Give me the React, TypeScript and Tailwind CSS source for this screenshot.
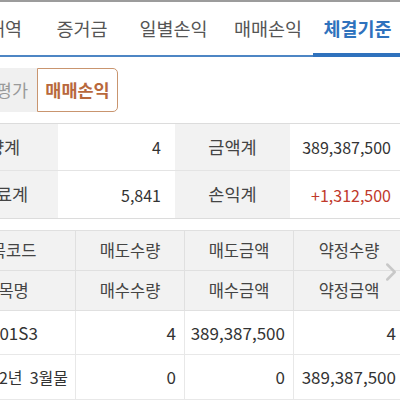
import { ChevronRight } from "lucide-react";

const tabs = [
  { label: "내역", w: "w-[70px]", ml: "-ml-[30px]" },
  { label: "증거금", w: "w-[84px]", ml: "" },
  { label: "일별손익", w: "w-[99px]", ml: "" },
  { label: "매매손익", w: "w-[90px]", ml: "" },
  { label: "체결기준", w: "w-[89px]", ml: "", active: true },
];

const font = "font-['Noto_Sans_CJK_KR','Noto_Sans',sans-serif]";

export default function App() {
  return (
    <div className={`w-[400px] h-[400px] overflow-hidden bg-white ${font} text-[#333]`}>
      <div className="h-[2px] bg-[#9c9c9c]" />

      {/* tabs */}
      <div className="flex h-[55px] border-b-2 border-[#4d86c4] whitespace-nowrap">
        {tabs.map((t) => (
          <div
            key={t.label}
            className={`relative flex shrink-0 items-center justify-center text-[18.5px] ${t.w} ${t.ml} ${
              t.active ? "font-bold text-[#2f72bd]" : "text-[#555]"
            }`}
          >
            {t.label}
            {t.active && (
              <div className="absolute left-0 right-0 -bottom-[2px] h-[4px] bg-[#2f72bd]" />
            )}
          </div>
        ))}
      </div>

      {/* segment */}
      <div className="mt-[11px] flex h-[44px] whitespace-nowrap">
        <div className="-ml-[44px] flex w-[81px] shrink-0 items-center justify-end pr-[9px] bg-[#f0f0f0] text-[17.5px] text-[#999]">
          손익평가
        </div>
        <div className="flex w-[81px] shrink-0 items-center justify-center rounded-r-[5px] border border-[#c9956f] bg-white text-[17.5px] font-bold text-[#b8683c]">
          매매손익
        </div>
      </div>

      {/* summary */}
      <div className="mt-[11px] border-t border-b border-[#dcdcdc] text-[16px] whitespace-nowrap">
        {[
          ["수량계", "4", "금액계", "389,387,500", false],
          ["수수료계", "5,841", "손익계", "+1,312,500", true],
        ].map(([l1, v1, l2, v2, red], i) => (
          <div key={i} className={`flex h-[47px] ${i === 0 ? "border-b border-[#e4e4e4]" : ""}`}>
            <div className="-ml-[66px] flex w-[124px] shrink-0 items-center justify-center bg-[#f2f2f2] text-[17.5px] text-[#444]">
              {l1}
            </div>
            <div className="flex w-[117px] shrink-0 items-center justify-end pr-[14px]">{v1}</div>
            <div className="flex w-[115px] shrink-0 items-center justify-center bg-[#f2f2f2] text-[17.5px] text-[#444]">
              {l2}
            </div>
            <div
              className={`flex w-[110px] shrink-0 items-center justify-end pr-[9px] ${
                red ? "text-[#c0392b]" : ""
              }`}
            >
              {v2}
            </div>
          </div>
        ))}
      </div>

      {/* detail table */}
      <div className="relative mt-[11px] border-t border-[#e0e0e0] whitespace-nowrap">
        <div className="bg-[#f2f2f2] text-[16.5px] text-[#444]">
          {[
            ["종목코드", "매도수량", "매도금액", "약정수량"],
            ["종목명", "매수수량", "매수금액", "약정금액"],
          ].map((row, i) => (
            <div key={i} className="flex h-[40px] border-b border-[#e0e0e0]">
              <div className="-ml-[63px] flex w-[139px] shrink-0 items-center justify-center border-r border-[#e0e0e0]">
                {row[0]}
              </div>
              <div className="flex w-[109px] shrink-0 items-center justify-center border-r border-[#e0e0e0]">
                {row[1]}
              </div>
              <div className="flex w-[109px] shrink-0 items-center justify-center border-r border-[#e0e0e0]">
                {row[2]}
              </div>
              <div className="flex w-[110px] shrink-0 items-center justify-center">{row[3]}</div>
            </div>
          ))}
        </div>
        <ChevronRight
          className="absolute right-[-6px] top-[26px] h-[30px] w-[30px] text-[#c8c8c8]"
          strokeWidth={2}
        />
        <div className="text-[17px] text-[#333]">
          {[
            ["101S3", "4", "389,387,500", "4"],
            ["22년  3월물", "0", "0", "389,387,500"],
          ].map((row, i) => (
            <div key={i} className={`flex ${i === 0 ? "h-[44px]" : "h-[45px]"} border-b border-[#e8e8e8]`}>
              <div
                className={`-ml-[63px] flex w-[139px] shrink-0 items-center pl-[53px] border-r border-[#e8e8e8] whitespace-pre ${
                  i === 1 ? "text-[16px]" : ""
                }`}
              >
                {row[0]}
              </div>
              <div className="flex w-[109px] shrink-0 items-center justify-end pr-[8px] border-r border-[#e8e8e8]">
                {row[1]}
              </div>
              <div className="flex w-[109px] shrink-0 items-center justify-end pr-[8px] border-r border-[#e8e8e8]">
                {row[2]}
              </div>
              <div className="flex w-[110px] shrink-0 items-center justify-end pr-[8px]">{row[3]}</div>
            </div>
          ))}
        </div>
      </div>
    </div>
  );
}
